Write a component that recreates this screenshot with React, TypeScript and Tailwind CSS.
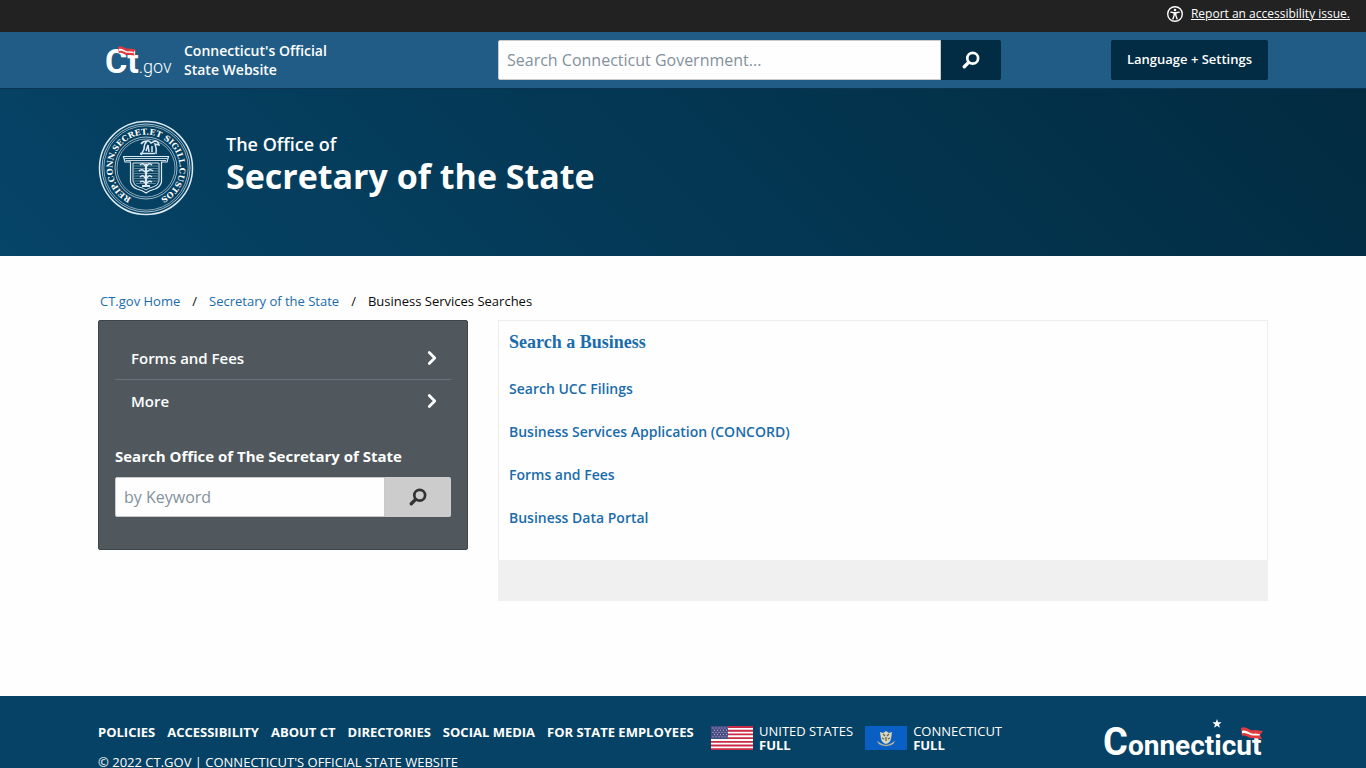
import { ChevronRight } from "lucide-react";

const footerLinks = [
  "Policies",
  "Accessibility",
  "About CT",
  "Directories",
  "Social Media",
  "For State Employees",
];

const serviceLinks = [
  "Search UCC Filings",
  "Business Services Application (CONCORD)",
  "Forms and Fees",
  "Business Data Portal",
];

const menuItems = ["Forms and Fees", "More"];

function SearchIcon() {
  return (
    <svg width="18" height="18" viewBox="0 0 18 18" fill="none" stroke="currentColor" aria-hidden="true">
      <circle cx="10.7" cy="7.2" r="5.4" strokeWidth="2.7" />
      <path d="M6.6 11.4 L2.3 15.7" strokeWidth="3.4" strokeLinecap="round" />
    </svg>
  );
}

function AccessibilityIcon() {
  return (
    <svg width="16" height="16" viewBox="0 0 16 16" fill="none" stroke="currentColor" aria-hidden="true">
      <circle cx="8" cy="8" r="7.3" strokeWidth="1.4" />
      <circle cx="8" cy="4" r="1.3" fill="currentColor" stroke="none" />
      <path
        d="M3.8 6.1 L6.8 6.7 H9.2 L12.2 6.1 M7.2 6.8 V9.2 L5.9 12.9 M8.8 6.8 V9.2 L10.1 12.9 M7.2 8 H8.8"
        strokeWidth="1.4"
        strokeLinecap="round"
      />
    </svg>
  );
}

function Ribbon() {
  return (
    <>
      <path d="M0 1 C5 -2 9 5 14 3 L22 4 L19 8 L21 12 L12 11 C8 12 5 7 1 9 Z" fill="#e03a3e" />
      <path d="M1 4 C6 2 9 8 14 6.5 L19 7.2 L18.5 8.6 L13 8.4 C9 9.5 6 4.5 1 6.6 Z" fill="#fff" />
    </>
  );
}

function CtGovLogo() {
  return (
    <svg width="66" height="42" viewBox="0 0 66 42" role="img" aria-label="CT.gov">
      <g fill="#fff" fontFamily="Roboto, sans-serif">
        <text x="-1" y="34" fontSize="34">
          <tspan fontWeight="700">Ct</tspan>
          <tspan fontSize="18" fontWeight="300">.gov</tspan>
        </text>
      </g>
      <g transform="translate(12 7) scale(.8)">
        <Ribbon />
      </g>
    </svg>
  );
}

function ConnecticutLogo() {
  return (
    <svg width="164" height="50" viewBox="0 0 164 50" role="img" aria-label="Connecticut">
      <text x="-1" y="41" fill="#fff" fontFamily="Roboto, sans-serif" fontWeight="700" fontSize="28">
        <tspan fontSize="38">C</tspan>onnecticut
      </text>
      <path d="M113 5 L114.2 8.2 L117.6 8.3 L115 10.4 L115.9 13.7 L113 11.8 L110.1 13.7 L111 10.4 L108.4 8.3 L111.8 8.2 Z" fill="#fff" />
      <g transform="translate(137 13)">
        <Ribbon />
      </g>
    </svg>
  );
}

function StateSeal() {
  return (
    <svg width="96" height="96" viewBox="0 0 96 96" fill="none" stroke="#dcebf3" role="img" aria-label="State seal">
      <circle cx="48" cy="48" r="46.5" strokeWidth="1.5" />
      <circle cx="48" cy="48" r="44" strokeWidth="1" opacity=".75" />
      <circle cx="48" cy="48" r="42.2" strokeWidth="1" opacity=".6" />
      <circle cx="48" cy="48" r="31" strokeWidth="1" opacity=".7" />
      <circle cx="48" cy="48" r="29" strokeWidth="1" opacity=".6" />
      <path id="seal-ring" d="M35 78.9 A33.5 33.5 0 1 1 61 78.9" stroke="none" />
      <text fill="#fff" stroke="none" fontSize="8" fontWeight="700" fontFamily="'DejaVu Serif', serif">
        <textPath href="#seal-ring" startOffset="50%" textAnchor="middle">
          REIP.CONN.SECRET.ET SIGILL.CUSTOS
        </textPath>
      </text>
      <path d="M25.5 36.5 H70.5 L69 42 H63.5 V62 Q62 67 57 69 Q51 70.5 48 73 Q45 70.5 39 69 Q34 67 32.5 62 V42 H27 Z" fill="#07405f" strokeWidth="1.2" />
      <path d="M27 38.5 H69 M28 40.5 H68" strokeWidth=".9" />
      <path d="M35 43 V61 Q36 66 41 67 Q46 68 48 70 Q50 68 55 67 Q60 66 61 61 V43 Z" strokeWidth="1" />
      <path d="M36 46H60M36 48.5H60M36 51H60M36 53.5H60M36 56H60M36 58.5H60M36 61H60M38 63.5H58" strokeWidth=".8" opacity=".5" />
      <path d="M48 44 V66 M44 66 H52" strokeWidth="2.2" />
      <path d="M42 45 Q45 42 47 46 M54 45 Q51 42 49 46 M41 51 Q44 48 47 52 M55 51 Q52 48 49 52 M42 57 Q45 54 47 58 M54 57 Q51 54 49 58 M42 62 Q45 60 47 63 M54 62 Q51 60 49 63" strokeWidth="1.5" />
      <path d="M42 33.5 H57 M43 35 L46 29 Q46 24 49 21 Q51 20 53 23 L57 21 Q60 21 61 25 L57 24 Q59 29 58 34 M48 31 L50 25 L51 32 M54 32 L54 26 M43 24 Q45 21 49 21" strokeWidth="1.5" />
    </svg>
  );
}

function UsFlag() {
  return (
    <svg width="42" height="24" viewBox="0 0 42 24" role="img" aria-label="United States flag">
      <rect width="42" height="24" fill="#fff" />
      <path
        d="M0 1H42M0 4.7H42M0 8.4H42M0 12.1H42M0 15.8H42M0 19.5H42M0 23.1H42"
        stroke="#c92a46"
        strokeWidth="1.85"
      />
      <rect width="17" height="13" fill="#4a4d84" />
      <path
        d="M1.5 2H17M3 4.2H17M1.5 6.4H17M3 8.6H17M1.5 10.8H17"
        stroke="#c5c7dc"
        strokeWidth=".9"
        strokeDasharray="1 2"
      />
    </svg>
  );
}

function CtFlag() {
  return (
    <svg width="42" height="24" viewBox="0 0 42 24" role="img" aria-label="Connecticut flag">
      <rect width="42" height="24" fill="#0a5fc4" />
      <path d="M15 6 L18 7 L21 5 L24 7 L27 6 L26 13 Q25 17 21 18 Q17 17 16 13 Z" fill="#d8d6be" />
      <path d="M18 8 L20 10 M24 8 L22 10 M21 11 V15 M17 12 L19 13 M25 12 L23 13" stroke="#5c6551" strokeWidth="1.3" />
      <path d="M12 15 L15 17 Q21 21 27 17 L30 15 L28 18 Q21 22 14 18 Z" fill="#d8d6be" stroke="#8b8b70" strokeWidth=".4" />
    </svg>
  );
}

export default function App() {
  return (
    <div className="flex min-h-screen flex-col bg-[#fefefe] font-['Open_Sans',sans-serif] text-[#0a0a0a]">
      <div className="flex h-8 items-center justify-end gap-2 bg-[#222] px-4 pb-1 text-xs text-white">
        <AccessibilityIcon />
        <a href="#accessibility" className="underline">
          Report an accessibility issue.
        </a>
      </div>

      <header className="border-b border-[#0a3350] bg-[#205c85]">
        <div className="mx-auto grid h-14 max-w-[1170px] grid-cols-12 items-center gap-x-[30px]">
          <a href="#home" className="col-span-4 flex items-center gap-3 pl-2 text-white">
            <CtGovLogo />
            <span className="text-sm leading-[19px] font-semibold">
              Connecticut's Official
              <br />
              State Website
            </span>
          </a>
          <form className="col-span-5 flex w-[503px]" onSubmit={(e) => e.preventDefault()}>
            <input
              type="search"
              aria-label="Search Connecticut Government"
              placeholder="Search Connecticut Government..."
              className="h-10 min-w-0 flex-1 rounded-l-xs border border-[#cacaca] bg-[#fefefe] px-2 text-base placeholder:text-[#84919c]"
            />
            <button
              type="submit"
              aria-label="Search"
              className="flex h-10 w-[60px] items-center justify-center rounded-r-xs bg-[#022c43] text-white"
            >
              <SearchIcon />
            </button>
          </form>
          <div className="col-span-3 flex justify-end">
            <button type="button" className="h-10 w-[157px] rounded-xs bg-[#022c43] text-[13px] font-semibold text-white">
              Language + Settings
            </button>
          </div>
        </div>
      </header>

      <section className="bg-linear-45 from-[#064468] to-[#022b40]">
        <div className="mx-auto flex h-[167px] max-w-[1170px] items-start gap-8 pt-[31px] text-white">
          <StateSeal />
          <h1 className="pt-3">
            <span className="block text-lg leading-6 font-semibold">The Office of</span>
            <span className="block text-[34px] leading-10 font-bold">Secretary of the State</span>
          </h1>
        </div>
      </section>

      <main className="mx-auto w-full max-w-[1170px] flex-1 pt-9 pb-[95px]">
        <nav aria-label="Breadcrumb" className="flex h-7 items-start gap-3 px-0.5 text-[13px] leading-[18px]">
          <a href="#home" className="text-[#1a6cab]">CT.gov Home</a>
          <span>/</span>
          <a href="#sots" className="text-[#1a6cab]">Secretary of the State</a>
          <span>/</span>
          <span>Business Services Searches</span>
        </nav>

        <div className="grid grid-cols-12 items-start gap-x-[30px]">
          <aside className="col-span-4 rounded-xs border border-[#3d464a] bg-[#50585d] px-4 pt-4 pb-8 text-white">
            <ul>
              {menuItems.map((item, index) => (
                <li key={index} className="border-b border-[#697278] last:border-b-0">
                  <a href="#menu" className="flex h-[42px] items-center justify-between px-4 text-[15px] font-semibold">
                    {item}
                    <ChevronRight className="-mr-2" size={22} strokeWidth={3} />
                  </a>
                </li>
              ))}
            </ul>
            <form className="pt-[22px]" onSubmit={(e) => e.preventDefault()}>
              <label htmlFor="keyword" className="block pb-[9px] text-[15px] leading-6 font-bold">
                Search Office of The Secretary of State
              </label>
              <div className="flex">
                <input
                  id="keyword"
                  type="search"
                  placeholder="by Keyword"
                  className="h-10 min-w-0 flex-1 rounded-l-xs border border-[#cacaca] bg-[#fefefe] px-2 text-base placeholder:text-[#84919c]"
                />
                <button
                  type="submit"
                  aria-label="Search"
                  className="flex h-10 w-[66px] items-center justify-center rounded-r-xs bg-[#ccc] text-[#333]"
                >
                  <SearchIcon />
                </button>
              </div>
            </form>
          </aside>

          <div className="col-span-8">
            <div className="border border-b-0 border-[#eee] px-2.5 pt-[9px] pb-2.5 text-[#1a6cab]">
              <a href="#business" className="block font-['Liberation_Serif',serif] text-lg leading-6 font-bold">
                Search a Business
              </a>
              <ul className="pt-6">
                {serviceLinks.map((link, index) => (
                  <li key={index} className="h-[43px] text-sm leading-[22px] font-semibold">
                    <a href="#service">{link}</a>
                  </li>
                ))}
              </ul>
            </div>
            <div className="h-[41px] bg-[#f0f0f0]" />
          </div>
        </div>
      </main>

      <footer className="bg-[#064265] text-white">
        <div className="mx-auto flex h-[72px] max-w-[1170px] items-start pt-6">
          <div className="w-[613px] text-[13px] leading-4 uppercase">
            <ul className="flex gap-3 pt-1 font-bold whitespace-nowrap">
              {footerLinks.map((link, index) => (
                <li key={index}>
                  <a href="#footer">{link}</a>
                </li>
              ))}
            </ul>
            <p className="pt-3.5">© 2022 CT.gov | Connecticut's Official State Website</p>
          </div>
          <div className="flex gap-3 pt-1 text-[13px] leading-[14px] uppercase">
            <div className="flex items-center gap-1.5">
              <UsFlag />
              <p>
                United States
                <br />
                <b>Full</b>
              </p>
            </div>
            <div className="flex items-center gap-1.5">
              <CtFlag />
              <p>
                Connecticut
                <br />
                <b>Full</b>
              </p>
            </div>
          </div>
          <a href="#home" className="-mt-1.5 ml-auto">
            <ConnecticutLogo />
          </a>
        </div>
      </footer>
    </div>
  );
}
